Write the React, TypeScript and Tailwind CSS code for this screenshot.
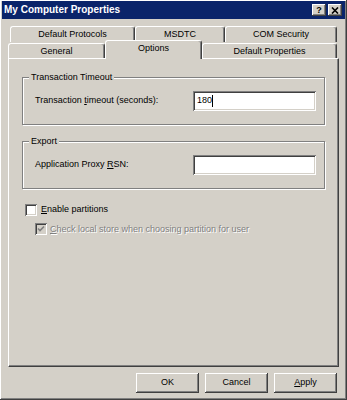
import React from "react";

const raised =
  "shadow-[inset_-1px_-1px_0_#404040,inset_1px_1px_0_#ffffff,inset_-2px_-2px_0_#808080,inset_2px_2px_0_#d4d0c8]";
const sunken =
  "shadow-[inset_1px_1px_0_#808080,inset_-1px_-1px_0_#ffffff,inset_2px_2px_0_#404040,inset_-2px_-2px_0_#d4d0c8]";

function Tab({ label, w, selected }: { label: string; w: number; selected?: boolean }) {
  return (
    <div
      style={{ width: w }}
      className={
        "relative flex items-center justify-center rounded-t-[3px] bg-[#d4d0c8] border-t border-l border-white border-r border-r-[#404040] shadow-[inset_-1px_0_0_#808080] " +
        (selected ? "z-10 -mt-[2px] h-[19px] pb-[3px]" : "h-[16px]")
      }
    >
      <span>{label}</span>
    </div>
  );
}

function Group({ title, children }: { title: string; children: React.ReactNode }) {
  return (
    <div className="relative h-[48px] border border-[#808080] shadow-[inset_1px_1px_0_#ffffff,1px_1px_0_#ffffff] flex items-center justify-between pl-[12px] pr-[8px]">
      <span className="absolute -top-[7px] left-[6px] bg-[#d4d0c8] px-[2px] leading-[12px]">{title}</span>
      {children}
    </div>
  );
}

function Input({ value }: { value?: string }) {
  return (
    <div className={"w-[123px] h-[20px] bg-white flex items-center pl-[4px] " + sunken}>
      {value && (
        <>
          <span>{value}</span>
          <span className="inline-block w-px h-[12px] bg-black" />
        </>
      )}
    </div>
  );
}

function Check({ checked, disabled }: { checked?: boolean; disabled?: boolean }) {
  return (
    <div
      className={
        "w-[12px] h-[12px] flex items-center justify-center " +
        (disabled ? "bg-[#d4d0c8] " : "bg-white ") +
        sunken
      }
    >
      {checked && (
        <svg width="8" height="8" viewBox="0 0 8 8">
          <path d="M1 3.5 L3 5.5 L7 1.5" stroke={disabled ? "#808080" : "#000"} strokeWidth="1.6" fill="none" />
        </svg>
      )}
    </div>
  );
}

function Button({ children }: { children: React.ReactNode }) {
  return (
    <div className={"w-[63px] h-[20px] flex items-center justify-center bg-[#d4d0c8] " + raised}>
      {children}
    </div>
  );
}

export default function App() {
  return (
    <div
      className={
        "w-[347px] h-[400px] bg-[#d4d0c8] px-[2px] pt-[1px] text-[9px] text-black " + raised
      }
      style={{ fontFamily: '"Liberation Sans", Arial, sans-serif' }}
    >
      <div className="h-[18px] bg-[#0a246a] flex items-center justify-between pl-[2px] pr-[3px]">
        <span className="text-white font-bold text-[10px] leading-none">My Computer Properties</span>
        <div className="flex gap-[2px]">
          <div className={"w-[14px] h-[12px] bg-[#d4d0c8] flex items-center justify-center font-bold text-[9px] leading-none " + raised}>
            ?
          </div>
          <div className={"w-[14px] h-[12px] bg-[#d4d0c8] flex items-center justify-center " + raised}>
            <svg width="8" height="7" viewBox="0 0 8 7">
              <path d="M1 0.5 L7 6.5 M7 0.5 L1 6.5" stroke="#000" strokeWidth="1.6" />
            </svg>
          </div>
        </div>
      </div>

      <div className="mt-[7px] ml-[8px] flex">
        <Tab label="Default Protocols" w={125} />
        <Tab label="MSDTC" w={90} />
        <Tab label="COM Security" w={112} />
      </div>
      <div className="ml-[6px] flex items-end">
        <Tab label="General" w={97} />
        <Tab label="Options" w={97} selected />
        <Tab label="Default Properties" w={135} />
      </div>

      <div
        className={
          "relative -mt-[1px] ml-[6px] w-[331px] h-[309px] bg-[#d4d0c8] px-[13px] pt-[18px] border-t border-l border-white border-r border-r-[#404040] border-b border-b-[#404040] shadow-[inset_-1px_-1px_0_#808080]"
        }
      >
        <Group title="Transaction Timeout">
          <span>
            Transaction <span className="underline">t</span>imeout (seconds):
          </span>
          <Input value="180" />
        </Group>
        <div className="mt-[16px]">
          <Group title="Export">
            <span>
              Application Proxy <span className="underline">R</span>SN:
            </span>
            <Input />
          </Group>
        </div>
        <div className="mt-[14px] ml-[3px] flex items-center gap-[4px]">
          <Check />
          <span>
            <span className="underline">E</span>nable partitions
          </span>
        </div>
        <div className="mt-[6px] ml-[13px] flex items-center gap-[3px] text-[#808080] [text-shadow:1px_1px_0_#ffffff]">
          <Check checked disabled />
          <span>
            <span className="underline">C</span>heck local store when choosing partition for user
          </span>
        </div>
      </div>

      <div className="mt-[6px] ml-[134px] flex gap-[6px]">
        <Button>OK</Button>
        <Button>Cancel</Button>
        <Button>
          <span>
            <span className="underline">A</span>pply
          </span>
        </Button>
      </div>
    </div>
  );
}
